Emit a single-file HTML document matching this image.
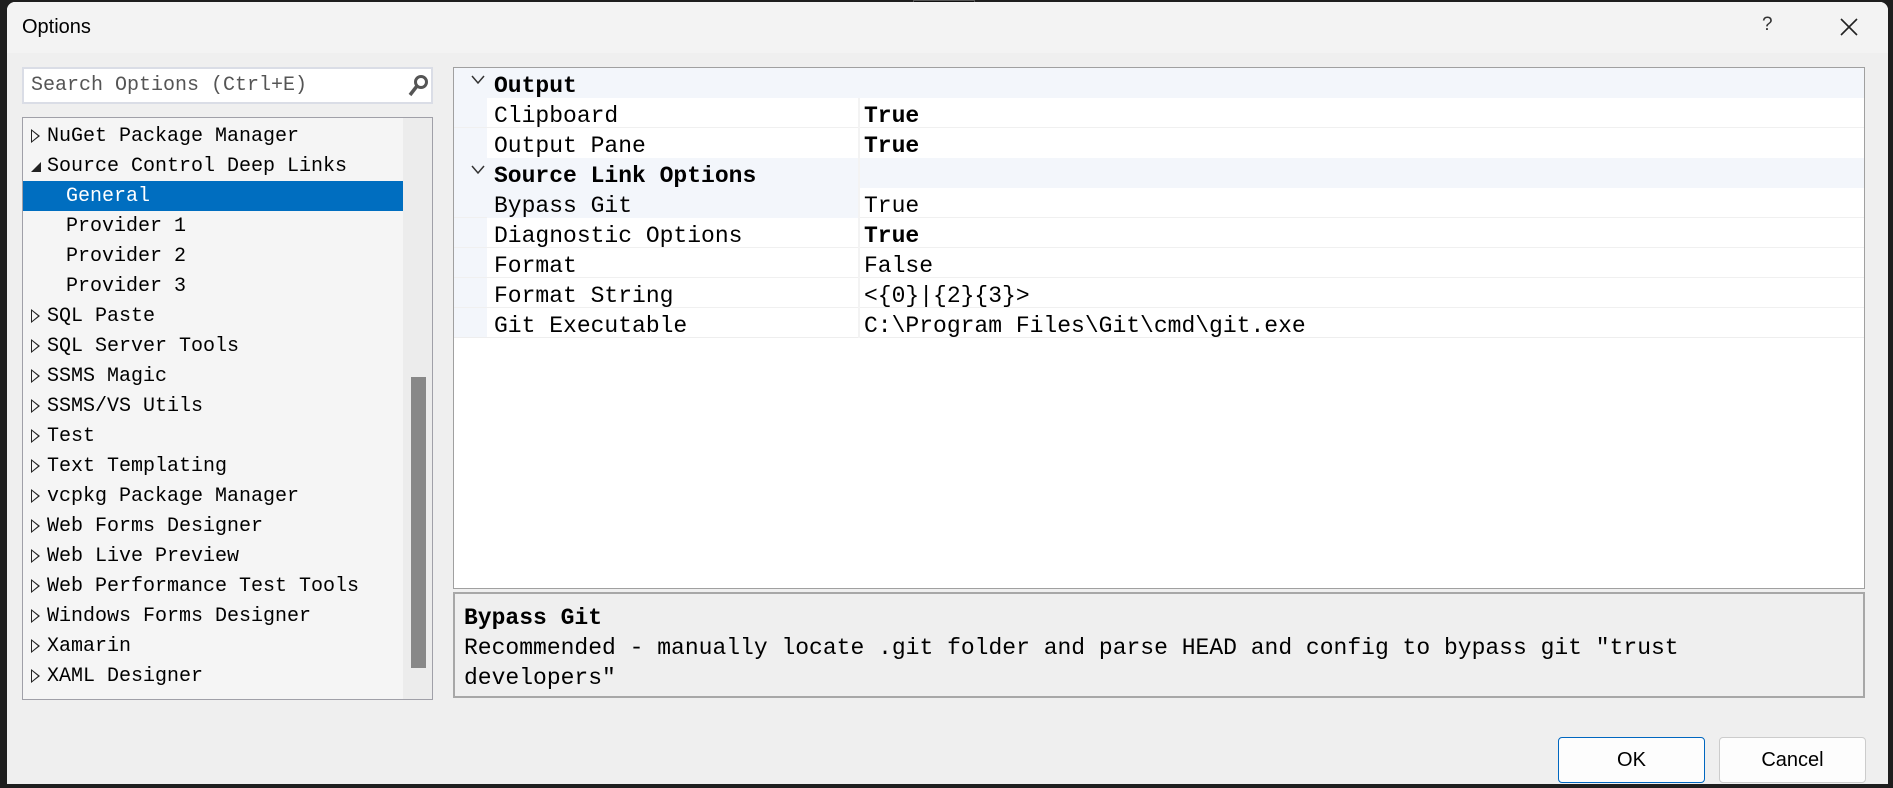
<!DOCTYPE html>
<html><head><meta charset="utf-8"><style>
*{box-sizing:border-box;margin:0;padding:0}
body{width:1893px;height:788px;background:#1e1e1e;position:relative;overflow:hidden;font-family:"Liberation Mono",monospace;color:#000}
.dlg{position:absolute;left:7px;top:2px;width:1881px;height:782px;background:#efefef;border-radius:8px 8px 0 0;overflow:hidden}
.tb{position:absolute;left:0;top:0;width:100%;height:51px;background:#f3f3f3}
.abs{position:absolute}
.sans{font-family:"Liberation Sans",sans-serif}
.search{left:15px;top:65px;width:411px;height:37px;background:#fff;border:2px solid #dadde6;font-size:20px;color:#555;padding:5px 0 0 7px}
.tree{left:15px;top:115px;width:411px;height:583px;background:#f5f5f5;border:1px solid #a0a0a8}
.row{position:absolute;left:0;height:30px;width:380px;font-size:20px;line-height:31px;white-space:pre;padding-left:24px}
.row.c{padding-left:43px}
.tri{position:absolute;left:8px;top:8px;width:0;height:0;border-left:9px solid #222;border-top:7px solid transparent;border-bottom:7px solid transparent}
.tri::after{content:"";position:absolute;left:-8px;top:-5px;border-left:6px solid #f5f5f5;border-top:5px solid transparent;border-bottom:5px solid transparent}
.grid{left:446px;top:65px;width:1412px;height:522px;background:#fff;border:1px solid #a0a0a0}
.g{position:absolute;left:0;width:1410px;height:30px;font-size:23px;line-height:36px;white-space:pre}
.gut{position:absolute;left:0;top:0;width:33px;height:270px;background:#f3f6fb}
.desc{left:446px;top:590px;width:1412px;height:106px;border:2px solid #a7a7a7;font-size:23px;line-height:30px;padding:9px 0 0 9px;white-space:pre}
.btn{height:46px;border:1px solid #ccc;background:#fdfdfd;border-radius:4px;font-size:20px;text-align:center;line-height:44px;font-family:"Liberation Sans",sans-serif}
</style></head><body>
<div class="abs" style="left:913px;top:0;width:62px;height:22px;background:#111;border:1px solid #555"><div style="margin:9px auto 0;width:36px;height:4px;border-top:1px solid #aaa;border-bottom:1px solid #aaa"></div></div>
<div class="dlg">
<div class="tb"></div>
<div class="abs sans" style="left:15px;top:14px;font-size:20px">Options</div>
<div class="abs sans" style="left:1755px;top:12px;font-size:19px;color:#333">?</div>
<svg class="abs" style="left:1833px;top:16px" width="18" height="18"><path d="M1 1L17 17M17 1L1 17" stroke="#222" stroke-width="1.6"/></svg>
<div class="abs search">Search Options (Ctrl+E)</div>
<svg class="abs" style="left:400px;top:72px" width="22" height="24"><circle cx="14" cy="8" r="5.5" fill="none" stroke="#555" stroke-width="3"/><path d="M10 12L3 21" stroke="#555" stroke-width="3.5"/></svg>
<div class="abs tree">
<div style="position:absolute;left:380px;top:0;width:29px;height:581px;background:#ececec"></div>
<div style="position:absolute;left:388px;top:259px;width:15px;height:291px;background:#888"></div>
<div class="row" style="top:3px"><span class="tri"></span>NuGet Package Manager</div>
<div class="row" style="top:33px"><span class="abs" style="left:8px;top:11px;width:0;height:0;border-right:10px solid #222;border-top:10px solid transparent"></span>Source Control Deep Links</div>
<div class="row c" style="top:63px;background:#006ec0;color:#fff">General</div>
<div class="row c" style="top:93px">Provider 1</div>
<div class="row c" style="top:123px">Provider 2</div>
<div class="row c" style="top:153px">Provider 3</div>
<div class="row" style="top:183px"><span class="tri"></span>SQL Paste</div>
<div class="row" style="top:213px"><span class="tri"></span>SQL Server Tools</div>
<div class="row" style="top:243px"><span class="tri"></span>SSMS Magic</div>
<div class="row" style="top:273px"><span class="tri"></span>SSMS/VS Utils</div>
<div class="row" style="top:303px"><span class="tri"></span>Test</div>
<div class="row" style="top:333px"><span class="tri"></span>Text Templating</div>
<div class="row" style="top:363px"><span class="tri"></span>vcpkg Package Manager</div>
<div class="row" style="top:393px"><span class="tri"></span>Web Forms Designer</div>
<div class="row" style="top:423px"><span class="tri"></span>Web Live Preview</div>
<div class="row" style="top:453px"><span class="tri"></span>Web Performance Test Tools</div>
<div class="row" style="top:483px"><span class="tri"></span>Windows Forms Designer</div>
<div class="row" style="top:513px"><span class="tri"></span>Xamarin</div>
<div class="row" style="top:543px"><span class="tri"></span>XAML Designer</div>
</div>
<div class="abs grid">
<div class="gut"></div>
<div class="g" style="top:0;background:#f3f6fb;font-weight:bold;padding-left:40px">Output</div>
<div class="g" style="top:30px;border-bottom:1px solid #f0f0f0"><span class="abs" style="left:40px">Clipboard</span><span class="abs" style="left:410px;font-weight:bold">True</span></div>
<div class="g" style="top:60px"><span class="abs" style="left:40px">Output Pane</span><span class="abs" style="left:410px;font-weight:bold">True</span></div>
<div class="g" style="top:90px;background:#f3f6fb;font-weight:bold;padding-left:40px">Source Link Options</div>
<div class="g" style="top:120px;border-bottom:1px solid #f0f0f0"><span class="abs" style="left:33px;width:371px;height:30px;background:#f3f6fb"></span><span class="abs" style="left:40px">Bypass Git</span><span class="abs" style="left:410px">True</span></div>
<div class="g" style="top:150px;border-bottom:1px solid #f0f0f0"><span class="abs" style="left:40px">Diagnostic Options</span><span class="abs" style="left:410px;font-weight:bold">True</span></div>
<div class="g" style="top:180px;border-bottom:1px solid #f0f0f0"><span class="abs" style="left:40px">Format</span><span class="abs" style="left:410px">False</span></div>
<div class="g" style="top:210px;border-bottom:1px solid #f0f0f0"><span class="abs" style="left:40px">Format String</span><span class="abs" style="left:410px">&lt;{0}|{2}{3}&gt;</span></div>
<div class="g" style="top:240px;border-bottom:1px solid #eee"><span class="abs" style="left:40px">Git Executable</span><span class="abs" style="left:410px">C:\Program Files\Git\cmd\git.exe</span></div>
<div class="abs" style="left:404px;top:30px;width:2px;height:240px;background:#f3f3f3"></div>
<svg class="abs" style="left:17px;top:7px" width="14" height="10"><path d="M1 1L7 8L13 1" fill="none" stroke="#333" stroke-width="1.5"/></svg>
<svg class="abs" style="left:17px;top:97px" width="14" height="10"><path d="M1 1L7 8L13 1" fill="none" stroke="#333" stroke-width="1.5"/></svg>
</div>
<div class="abs desc"><b>Bypass Git</b>
Recommended - manually locate .git folder and parse HEAD and config to bypass git "trust
developers"</div>
<div class="abs btn" style="left:1551px;top:735px;width:147px;border:1px solid #0067c0">OK</div>
<div class="abs btn" style="left:1712px;top:735px;width:147px">Cancel</div>
</div>
</body></html>
